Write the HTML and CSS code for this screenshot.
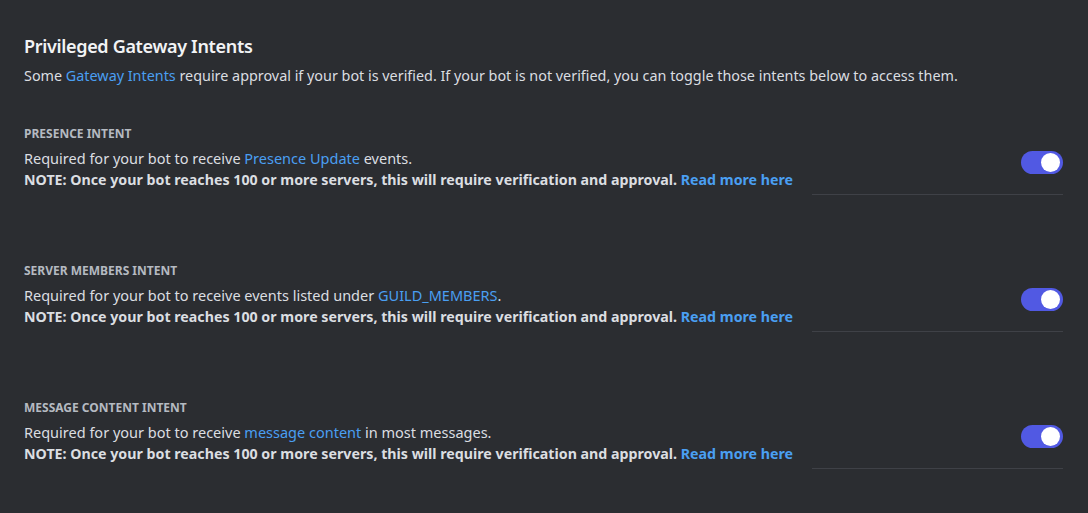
FILE: index.html
```html
<!DOCTYPE html>
<html>
<head>
<meta charset="utf-8">
<link rel="stylesheet" href="styles.css">
</head>
<body>
<main class="page">
  <header class="head">
    <h2 class="title">Privileged Gateway Intents</h2>
    <p class="desc">Some <a class="link">Gateway Intents</a> require approval if your bot is verified. If your bot is not verified, you can toggle those intents below to access them.</p>
  </header>

  <section class="intent">
    <h3 class="label">PRESENCE INTENT</h3>
    <div class="row">
      <div class="text">
        <p class="line">Required for your bot to receive <a class="link">Presence Update</a> events.</p>
        <p class="note">NOTE: Once your bot reaches 100 or more servers, this will require verification and approval. <a class="link">Read more here</a></p>
      </div>
      <div class="switch"><span class="knob"></span></div>
    </div>
    <div class="divider"></div>
  </section>

  <section class="intent">
    <h3 class="label">SERVER MEMBERS INTENT</h3>
    <div class="row">
      <div class="text">
        <p class="line">Required for your bot to receive events listed under <a class="link">GUILD_MEMBERS</a>.</p>
        <p class="note">NOTE: Once your bot reaches 100 or more servers, this will require verification and approval. <a class="link">Read more here</a></p>
      </div>
      <div class="switch"><span class="knob"></span></div>
    </div>
    <div class="divider"></div>
  </section>

  <section class="intent">
    <h3 class="label">MESSAGE CONTENT INTENT</h3>
    <div class="row">
      <div class="text">
        <p class="line">Required for your bot to receive <a class="link">message content</a> in most messages.</p>
        <p class="note">NOTE: Once your bot reaches 100 or more servers, this will require verification and approval. <a class="link">Read more here</a></p>
      </div>
      <div class="switch"><span class="knob"></span></div>
    </div>
    <div class="divider"></div>
  </section>
</main>
</body>
</html>
```

FILE: styles.css
```css
html, body {
  margin: 0;
  padding: 0;
  background: #2b2d31;
  font-family: "Noto Sans", "Liberation Sans", sans-serif;
  color: #dbdee1;
}

.page {
  padding: 34px 25px 0 24px;
}

.title {
  margin: 0;
  font-size: 18px;
  line-height: 24px;
  font-weight: 600;
  letter-spacing: -0.33px;
  color: #f2f3f5;
}

.desc {
  margin: 9px 0 0;
  font-size: 14.37px;
  line-height: 18px;
  color: #dbdee1;
}

.link {
  color: #4a9ff2;
  text-decoration: none;
}

.intent {
  margin-top: 41px;
  height: 96px;
}

.intent + .intent {
  margin-top: 41px;
}

.label {
  margin: 0;
  font-size: 12px;
  line-height: 16px;
  font-weight: 700;
  color: #b5bac1;
}

.row {
  display: flex;
  align-items: center;
  justify-content: space-between;
  margin-top: 6px;
}

.line {
  margin: 0;
  font-size: 14.5px;
  line-height: 21px;
}

.note {
  margin: 0;
  font-size: 14.22px;
  line-height: 21px;
  font-weight: 700;
  color: #dbdee1;
}

.switch {
  position: relative;
  width: 42px;
  height: 23px;
  border-radius: 12px;
  background: #5159e3;
  margin-bottom: 14px;
  flex: none;
}

.knob {
  position: absolute;
  top: 2px;
  right: 3px;
  width: 19px;
  height: 19px;
  border-radius: 50%;
  background: #ffffff;
}

.divider {
  margin: 4px 0 0 788px;
  height: 1px;
  background: #3f4147;
}
```
